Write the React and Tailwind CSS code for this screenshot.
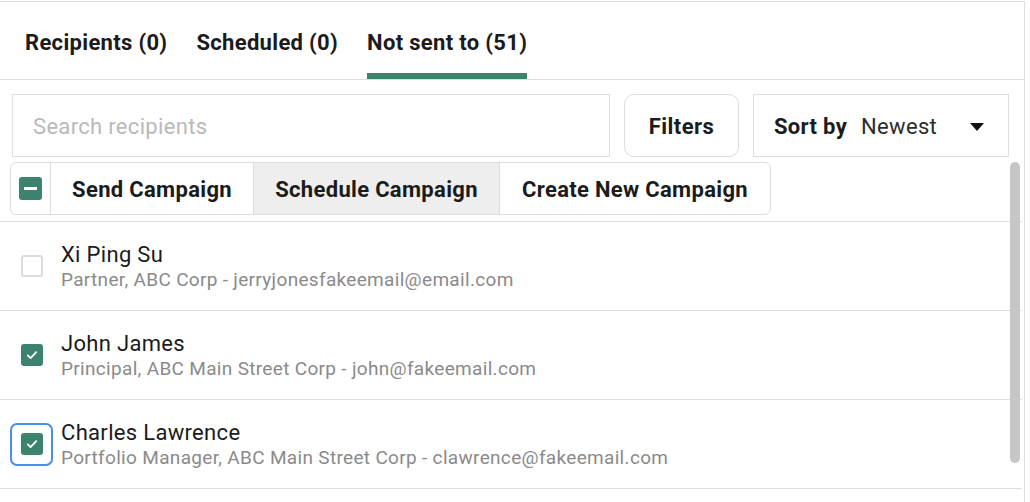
import { useState } from 'react';

const GREEN = 'bg-[#3b836f]';

const people = [
  { name: 'Xi Ping Su', info: 'Partner, ABC Corp - jerryjonesfakeemail@email.com', checked: false },
  { name: 'John James', info: 'Principal, ABC Main Street Corp - john@fakeemail.com', checked: true },
  { name: 'Charles Lawrence', info: 'Portfolio Manager, ABC Main Street Corp - clawrence@fakeemail.com', checked: true, focused: true },
];

const Check = () => (
  <svg viewBox="0 0 20 20" className="h-[14px] w-[14px]" fill="none">
    <path d="M4 10.5l4 4 8-8.5" stroke="white" strokeWidth="2.6" strokeLinecap="round" strokeLinejoin="round" />
  </svg>
);

const Box = ({ checked }) =>
  checked ? (
    <span className={`flex h-[22px] w-[22px] items-center justify-center rounded-[3px] ${GREEN}`}>
      <Check />
    </span>
  ) : (
    <span className="block h-[22px] w-[22px] rounded-[3px] border-2 border-[#dcdcdc] bg-white" />
  );

const App = () => {
  const [tab] = useState(2);
  const tabs = ['Recipients (0)', 'Scheduled (0)', 'Not sent to (51)'];

  return (
    <div className="w-[1025px] bg-white tracking-[0.02em] text-[#1b1b1b]" style={{ fontFamily: 'Roboto, "Liberation Sans", sans-serif' }}>
      <div className="mt-px border-r border-t border-[#dedede]">
        <div className="flex gap-[29px] border-b border-[#dedede] pl-[25px]">
          {tabs.map((t, i) => (
            <div key={t} className="flex flex-col">
              <div className="pt-[26px] pb-[15px] text-[22px] font-bold leading-[30px]">{t}</div>
              <div className={`h-[6px] ${i === tab ? 'bg-[#3b836f]' : 'bg-transparent'}`} />
            </div>
          ))}
        </div>

        <div className="relative">
          <div className="flex gap-[14px] pl-[12px] pt-[14px]">
            <div className="flex h-[63px] w-[598px] items-center border border-[#dedede] pl-[20px] pt-[2px] text-[22px] text-[#b9b9b9]">
              Search recipients
            </div>
            <button className="h-[63px] w-[115px] rounded-[10px] border border-[#dedede] pt-[2px] text-[22px] font-bold tracking-[0.02em]">Filters</button>
            <div className="flex h-[63px] w-[256px] items-center border border-[#dedede] pl-[20px] pr-[24px] pt-[2px] text-[22px]">
              <span className="font-bold">Sort by</span>
              <span className="ml-[14px] text-[#2b2b2b]">Newest</span>
              <svg viewBox="0 0 14 8" className="ml-auto h-[8px] w-[14px]">
                <path d="M0 0h14L7 8z" fill="#111" />
              </svg>
            </div>
          </div>

          <div className="flex pb-[6px] pl-[10px] pt-[5px]">
            <div className="flex h-[53px] overflow-hidden rounded-[6px] border border-[#dedede] text-[22px] font-bold">
              <div className="flex w-[40px] items-center justify-center border-r border-[#dedede]">
                <span className={`flex h-[23px] w-[23px] items-center justify-center rounded-[3px] ${GREEN}`}>
                  <span className="h-[3px] w-[13px] bg-white" />
                </span>
              </div>
              <div className="flex w-[203px] items-center justify-center border-r border-[#dedede] pt-[2px]">Send Campaign</div>
              <div className="flex w-[246px] items-center justify-center border-r border-[#dedede] bg-[#eeeeee] pt-[2px]">Schedule Campaign</div>
              <div className="flex w-[270px] items-center justify-center pt-[2px]">Create New Campaign</div>
            </div>
          </div>

          <div className="mr-[2px] border-t border-[#dedede]">
            {people.map((p) => (
              <div key={p.name} className="flex h-[89px] items-center border-b border-[#dedede] pl-[10px]">
                <div
                  className={`flex h-[43px] w-[43px] items-center justify-center rounded-[7px] border-2 ${
                    p.focused ? 'border-[#4a8cf2]' : 'border-transparent'
                  }`}
                >
                  <Box checked={p.checked} />
                </div>
                <div className="ml-[8px] pt-[1px]">
                  <div className="text-[22px] leading-[26px] text-[#1b1b1b]">{p.name}</div>
                  <div className="text-[19px] leading-[23px] text-[#8a8a8a]">{p.info}</div>
                </div>
              </div>
            ))}
            <div className="h-[13px]" />
          </div>

          <div className="absolute right-[4px] top-[82px] h-[301px] w-[10px] rounded-full bg-[#c6c6c6]" />
        </div>
      </div>
    </div>
  );
};

export default App;
